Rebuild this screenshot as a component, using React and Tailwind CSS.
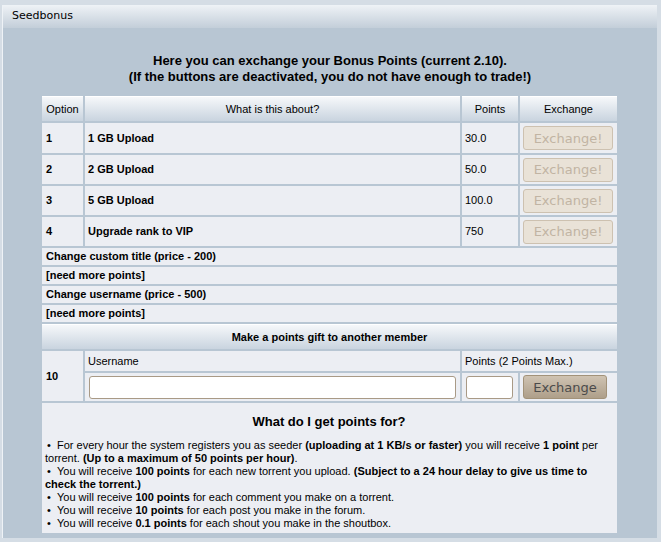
import React from 'react';

const rows = [
  { id: 1, label: '1 GB Upload', points: '30.0' },
  { id: 2, label: '2 GB Upload', points: '50.0' },
  { id: 3, label: '5 GB Upload', points: '100.0' },
  { id: 4, label: 'Upgrade rank to VIP', points: '750' },
];

const cell = 'bg-[#eceef3] px-[4px] align-middle';
const headBase = 'bg-gradient-to-b from-[#f6f8fa] to-[#c9d4df] border-t border-white text-center align-middle';
const head = headBase + ' font-normal';

const DisabledButton = () => (
  <button
    disabled
    className="w-[90px] h-[24px] ml-[-1px] rounded-[3px] border border-[#cdc1b0] bg-[#e9e2d7] text-[13px] text-[#c1b4a3] leading-none"
    style={{ fontFamily: '"DejaVu Sans", sans-serif' }}
  >
    Exchange!
  </button>
);

const Bullet = () => <span className="ml-[2px]">&bull;&nbsp;&nbsp;</span>;

export default function App() {
  return (
    <div
      className="w-[661px] h-[542px] bg-[#d5dde5] pt-[5px] pl-[2px] text-[11px] text-black"
      style={{ fontFamily: '"Liberation Sans", Arial, sans-serif' }}
    >
      <div className="w-[655px] h-[533px] bg-[#b8c6d3] border-l border-t border-[#eef2f6]">
        <div
          className="h-[22px] pl-[9px] pt-[4px] bg-gradient-to-b from-[#edf1f5] to-[#c3ced9] text-[11px] leading-none"
          style={{ fontFamily: '"DejaVu Sans", sans-serif' }}
        >
          Seedbonus
        </div>

        <div className="pt-[25px] text-center font-bold text-[13px] leading-[16px]">
          <div>Here you can exchange your Bonus Points (current 2.10).</div>
          <div>(If the buttons are deactivated, you do not have enough to trade!)</div>
        </div>

        <table className="mt-[9px] ml-[37px] w-[579px] table-fixed border-separate border-spacing-[2px]">
          <colgroup>
            <col className="w-[41px]" />
            <col className="w-[375px]" />
            <col className="w-[56px]" />
            <col className="w-[97px]" />
          </colgroup>
          <tbody>
            <tr className="h-[25px]">
              <td className={head}>Option</td>
              <td className={head}>What is this about?</td>
              <td className={head}>Points</td>
              <td className={head}>Exchange</td>
            </tr>
            {rows.map((r, i) => (
              <tr key={r.id} className={i === 0 ? 'h-[30px]' : 'h-[29px]'}>
                <td className={cell + ' font-bold'}>{r.id}</td>
                <td className={cell + ' font-bold pl-[3px]'}>{r.label}</td>
                <td className={cell + ' pl-[3px]'}>{r.points}</td>
                <td className={cell + ' px-[3px]'}>
                  <DisabledButton />
                </td>
              </tr>
            ))}
            <tr className="h-[17px]">
              <td colSpan={4} className={cell + ' font-bold'}>Change custom title (price - 200)</td>
            </tr>
            <tr className="h-[17px]">
              <td colSpan={4} className={cell + ' font-bold'}>[need more points]</td>
            </tr>
            <tr className="h-[17px]">
              <td colSpan={4} className={cell + ' font-bold'}>Change username (price - 500)</td>
            </tr>
            <tr className="h-[17px]">
              <td colSpan={4} className={cell + ' font-bold'}>[need more points]</td>
            </tr>
            <tr className="h-[25px]">
              <td colSpan={4} className={headBase + ' font-bold'}>
                Make a points gift to another member
              </td>
            </tr>
            <tr className="h-[20px]">
              <td rowSpan={2} className={cell + ' font-bold'}>10</td>
              <td className={cell + ' pl-[3px]'}>Username</td>
              <td colSpan={2} className={cell + ' pl-[3px]'}>Points (2 Points Max.)</td>
            </tr>
            <tr className="h-[28px]">
              <td className={cell}>
                <input
                  type="text"
                  className="block w-full h-[23px] bg-white border border-[#a99a86] rounded-[3px] outline-none"
                />
              </td>
              <td className={cell}>
                <input
                  type="text"
                  className="block w-[47px] h-[23px] bg-white border border-[#a99a86] rounded-[3px] outline-none"
                />
              </td>
              <td className={cell + ' px-[3px]'}>
                <button
                  className="w-[84px] h-[24px] ml-[-1px] rounded-[3px] border border-[#a29279] bg-gradient-to-b from-[#cfc3b2] to-[#ae9f8a] text-[13px] text-[#4b4b4b] leading-none"
                  style={{ fontFamily: '"DejaVu Sans", sans-serif' }}
                >
                  Exchange
                </button>
              </td>
            </tr>
            <tr className="h-[130px]">
              <td colSpan={4} className={cell + ' align-top pl-[3px] pt-[11px]'}>
                <div className="text-center font-bold text-[13px] leading-[16px] mb-[9px]">
                  What do I get points for?
                </div>
                <div className="leading-[13px]">
                  <div>
                    <Bullet />For every hour the system registers you as seeder{' '}
                    <b>(uploading at 1 KB/s or faster)</b> you will receive <b>1 point</b> per torrent.{' '}
                    <b>(Up to a maximum of 50 points per hour)</b>.
                  </div>
                  <div>
                    <Bullet />You will receive <b>100 points</b> for each new torrent you upload.{' '}
                    <b>(Subject to a 24 hour delay to give us time to check the torrent.)</b>
                  </div>
                  <div>
                    <Bullet />You will receive <b>100 points</b> for each comment you make on a torrent.
                  </div>
                  <div>
                    <Bullet />You will receive <b>10 points</b> for each post you make in the forum.
                  </div>
                  <div>
                    <Bullet />You will receive <b>0.1 points</b> for each shout you make in the shoutbox.
                  </div>
                </div>
              </td>
            </tr>
          </tbody>
        </table>
      </div>
    </div>
  );
}
